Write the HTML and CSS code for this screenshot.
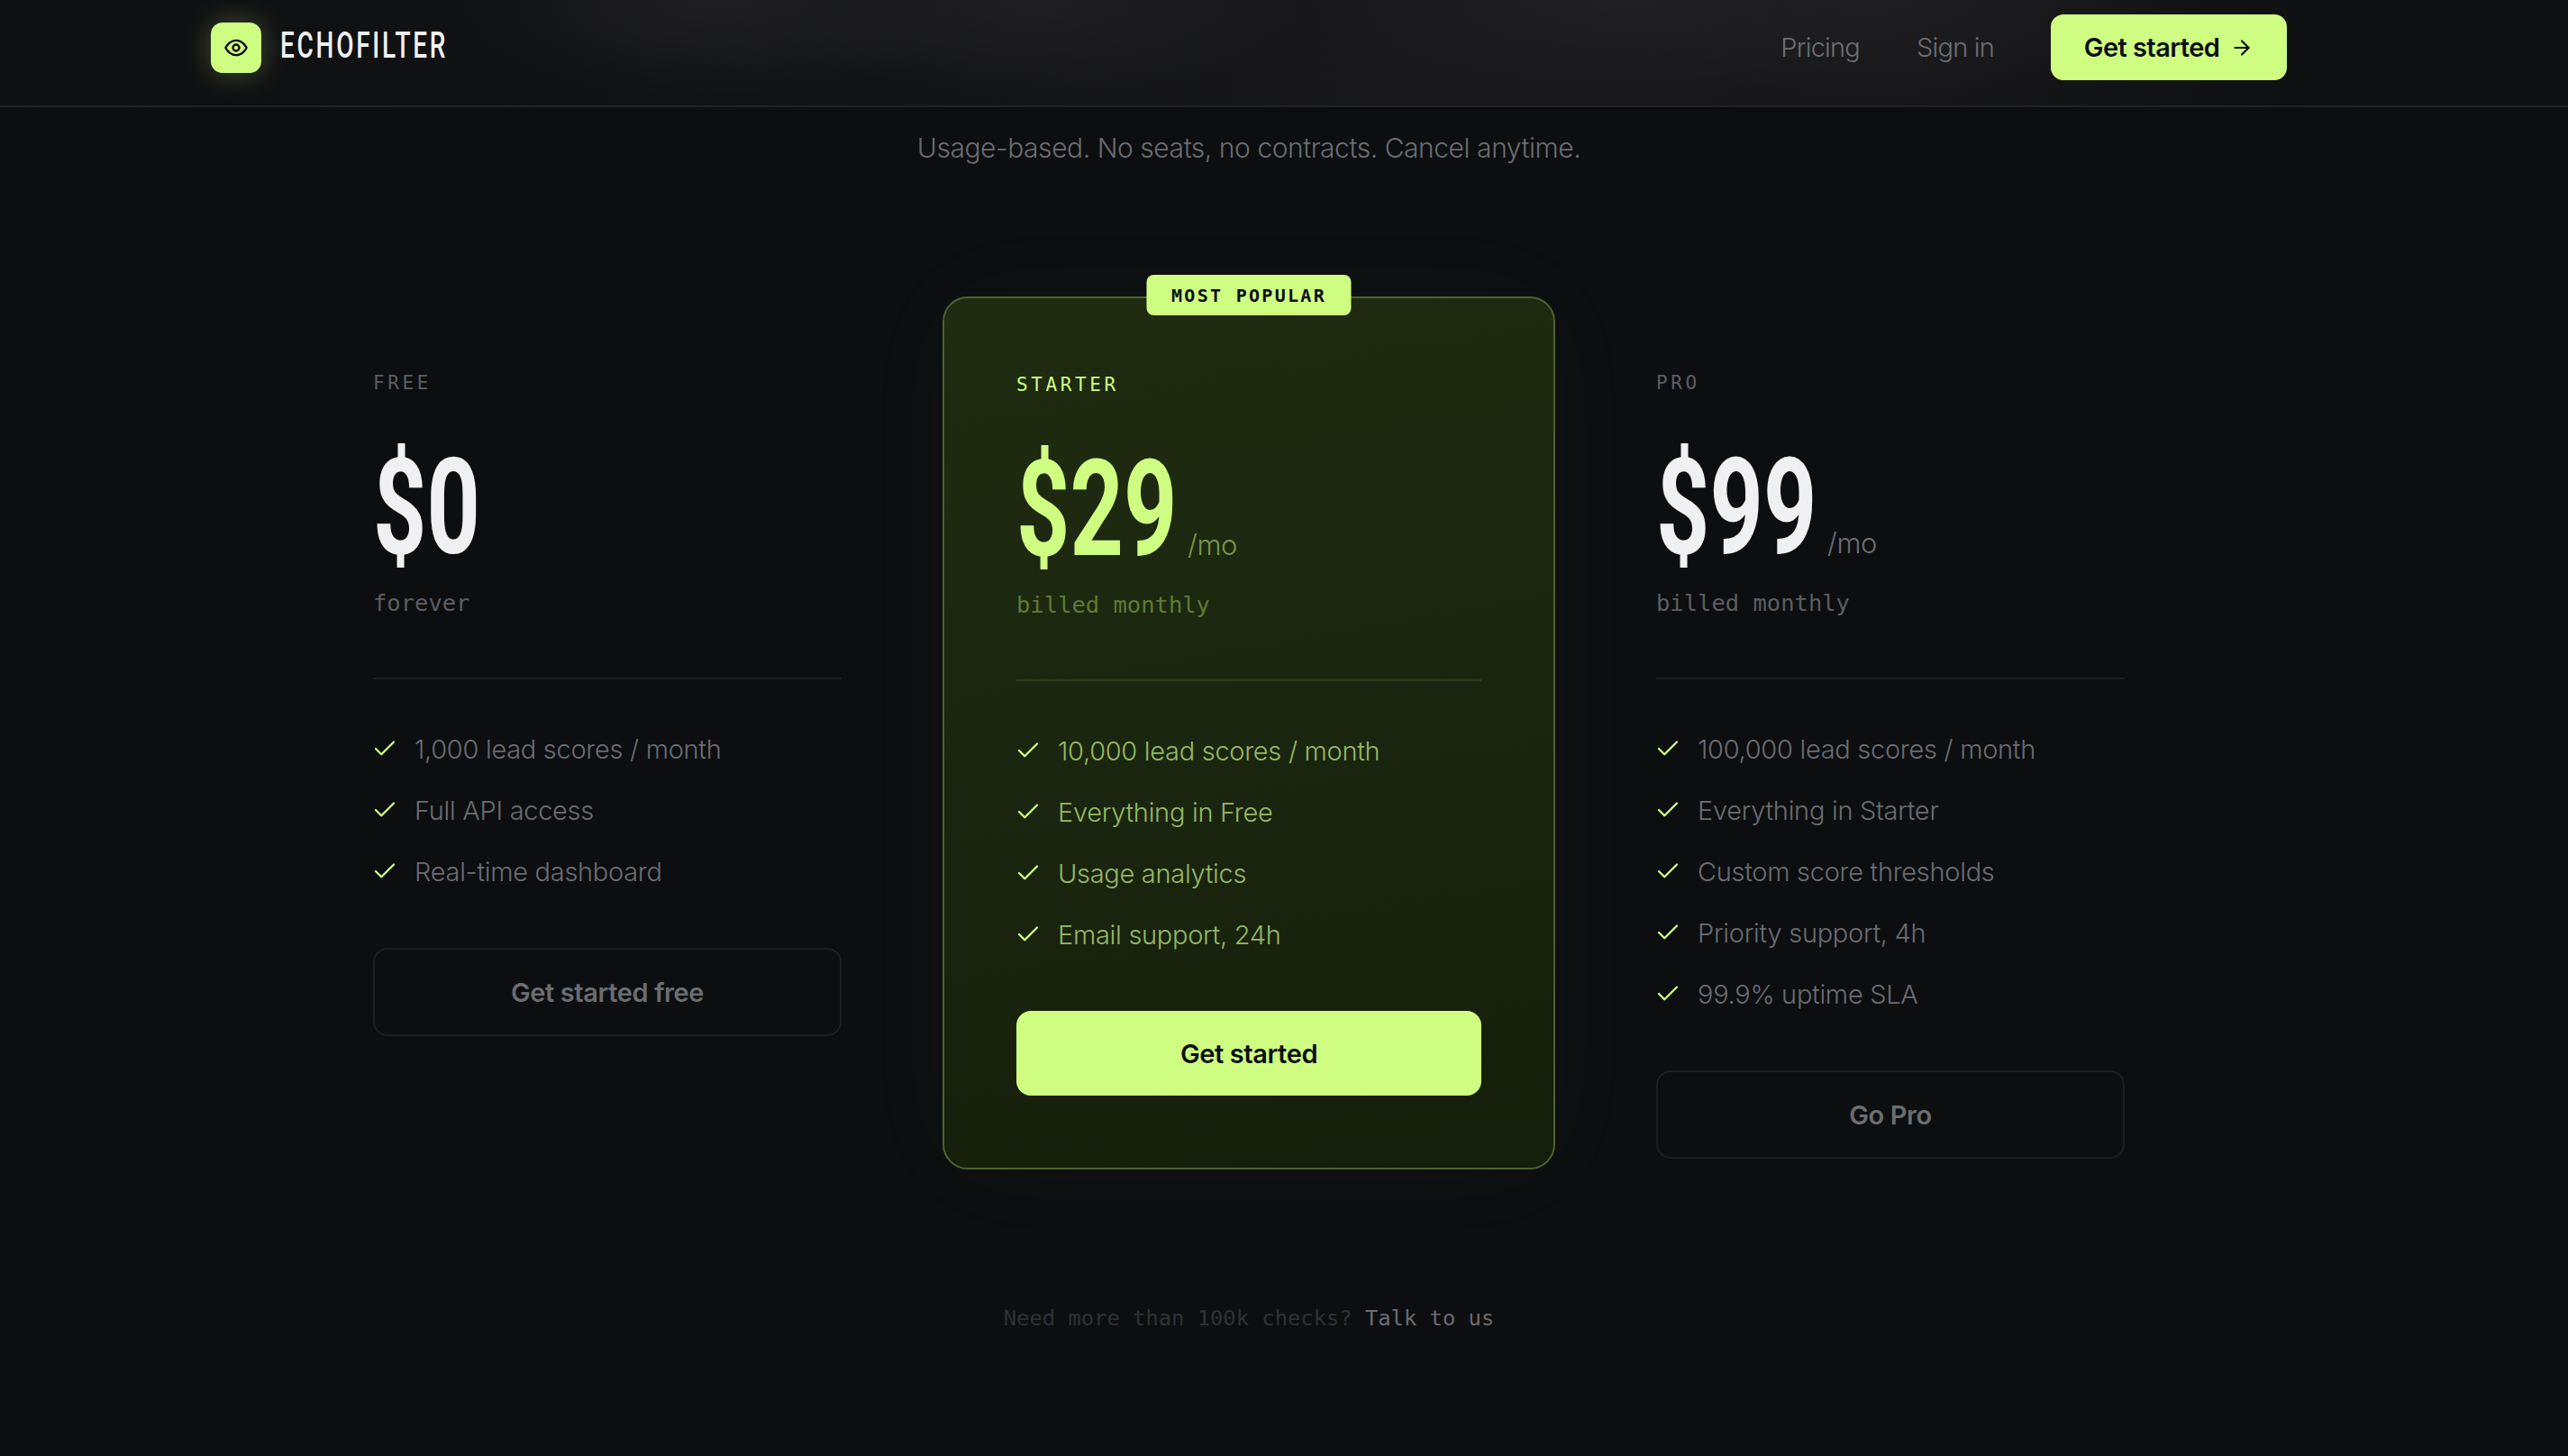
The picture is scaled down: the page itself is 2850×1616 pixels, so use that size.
FILE: index.html
```html
<!DOCTYPE html>
<html lang="en">
<head>
<meta charset="utf-8">
<title>EchoFilter Pricing</title>
<link rel="stylesheet" href="styles.css">
</head>
<body>
<header class="topbar">
  <div class="topbar-inner">
    <a class="brand" href="#">
      <span class="brand-mark">
        <svg class="eye" viewBox="0 0 24 24" fill="none" stroke="currentColor" stroke-width="2" stroke-linecap="round" stroke-linejoin="round"><path d="M2 12s3.5-7 10-7 10 7 10 7-3.5 7-10 7-10-7-10-7Z"/><circle cx="12" cy="12" r="3"/></svg>
      </span>
      <span class="brand-name">ECHOFILTER</span>
    </a>
    <nav class="nav">
      <a class="nav-link" href="#">Pricing</a>
      <a class="nav-link" href="#">Sign in</a>
      <a class="nav-cta" href="#">Get started
        <svg class="arrow" viewBox="0 0 24 24" fill="none" stroke="currentColor" stroke-width="2" stroke-linecap="round" stroke-linejoin="round"><path d="M5 12h14"/><path d="m12 5 7 7-7 7"/></svg>
      </a>
    </nav>
  </div>
</header>
<main class="page">
  <p class="subtitle">Usage-based. No seats, no contracts. Cancel anytime.</p>
  <section class="plans">
    <article class="plan">
      <h2 class="plan-name">FREE</h2>
      <div class="price-row"><span class="price">$0</span></div>
      <p class="billing">forever</p>
      <ul class="features">
        <li class="feature"><svg class="check" viewBox="0 0 24 24"><path d="M20 6 9 17l-5-5"/></svg>1,000 lead scores / month</li>
        <li class="feature"><svg class="check" viewBox="0 0 24 24"><path d="M20 6 9 17l-5-5"/></svg>Full API access</li>
        <li class="feature"><svg class="check" viewBox="0 0 24 24"><path d="M20 6 9 17l-5-5"/></svg>Real-time dashboard</li>
      </ul>
      <a class="plan-btn" href="#">Get started free</a>
    </article>
    <article class="plan plan-featured">
      <span class="badge">MOST POPULAR</span>
      <h2 class="plan-name">STARTER</h2>
      <div class="price-row"><span class="price">$29</span><span class="per">/mo</span></div>
      <p class="billing">billed monthly</p>
      <ul class="features">
        <li class="feature"><svg class="check" viewBox="0 0 24 24"><path d="M20 6 9 17l-5-5"/></svg>10,000 lead scores / month</li>
        <li class="feature"><svg class="check" viewBox="0 0 24 24"><path d="M20 6 9 17l-5-5"/></svg>Everything in Free</li>
        <li class="feature"><svg class="check" viewBox="0 0 24 24"><path d="M20 6 9 17l-5-5"/></svg>Usage analytics</li>
        <li class="feature"><svg class="check" viewBox="0 0 24 24"><path d="M20 6 9 17l-5-5"/></svg>Email support, 24h</li>
      </ul>
      <a class="plan-btn" href="#">Get started</a>
    </article>
    <article class="plan">
      <h2 class="plan-name">PRO</h2>
      <div class="price-row"><span class="price">$99</span><span class="per">/mo</span></div>
      <p class="billing">billed monthly</p>
      <ul class="features">
        <li class="feature"><svg class="check" viewBox="0 0 24 24"><path d="M20 6 9 17l-5-5"/></svg>100,000 lead scores / month</li>
        <li class="feature"><svg class="check" viewBox="0 0 24 24"><path d="M20 6 9 17l-5-5"/></svg>Everything in Starter</li>
        <li class="feature"><svg class="check" viewBox="0 0 24 24"><path d="M20 6 9 17l-5-5"/></svg>Custom score thresholds</li>
        <li class="feature"><svg class="check" viewBox="0 0 24 24"><path d="M20 6 9 17l-5-5"/></svg>Priority support, 4h</li>
        <li class="feature"><svg class="check" viewBox="0 0 24 24"><path d="M20 6 9 17l-5-5"/></svg>99.9% uptime SLA</li>
      </ul>
      <a class="plan-btn" href="#">Go Pro</a>
    </article>
  </section>
  <p class="footnote">Need more than 100k checks? <a class="footnote-link" href="#">Talk to us</a></p>
</main>
</body>
</html>
```
FILE: styles.css
```css
* { box-sizing: border-box; }
html, body { margin: 0; height: 100%; }
body {
  background: #0c0e10;
  color: #f0f0f2;
  font-family: Inter, "Liberation Sans", sans-serif;
  overflow: hidden;
}
a { text-decoration: none; color: inherit; }

.topbar {
  height: 119px;
  border-bottom: 2px solid #212224;
  background:
    radial-gradient(ellipse 300px 110px at 800px 0, #1f1f21 0%, rgba(31,31,33,0) 100%),
    radial-gradient(ellipse 300px 110px at 1150px 0, #1f1f21 0%, rgba(31,31,33,0) 100%),
    radial-gradient(ellipse 350px 110px at 1800px 0, #202022 0%, rgba(32,32,34,0) 100%),
    radial-gradient(ellipse 350px 110px at 2100px 0, #1e1e20 0%, rgba(30,30,32,0) 100%),
    linear-gradient(90deg, #0e0f11 0%, #121315 30%, #18181a 55%, #171719 75%, #0e0f11 92%);
}
.topbar-inner {
  width: 2304px;
  margin-left: 234px;
  height: 105px;
  display: flex;
  align-items: center;
  justify-content: space-between;
}
.brand { display: flex; align-items: center; gap: 21px; }
.brand-mark {
  width: 56px;
  height: 56px;
  border-radius: 13px;
  background: #cffd82;
  color: #0c0e10;
  display: flex;
  align-items: center;
  justify-content: center;
  box-shadow: 0 0 32px rgba(207, 253, 130, .28);
}
.eye { width: 28px; height: 28px; }
.brand-name {
  font-family: Roboto, "Liberation Sans", sans-serif;
  font-weight: 500;
  font-size: 40px;
  letter-spacing: 3.9px;
  color: #f0f0f2;
  transform: scaleX(.7);
  transform-origin: left center;
  margin-top: -5px;
}
.nav { display: flex; align-items: center; gap: 63px; }
.nav-link { font-size: 29px; font-weight: 300; color: #6e6f72; letter-spacing: -.8px; }
.nav-cta {
  width: 262px;
  height: 73px;
  border-radius: 14px;
  background: #cffd82;
  color: #0c0e10;
  font-size: 29px;
  font-weight: 600;
  letter-spacing: -.55px;
  display: flex;
  align-items: center;
  justify-content: center;
  gap: 12px;
}
.arrow { width: 26px; height: 26px; }

.page { width: 2104px; margin-left: 334px; }
.subtitle {
  margin: 24px 0 0;
  text-align: center;
  font-size: 30px;
  line-height: 42px;
  font-weight: 300;
  letter-spacing: -.45px;
  color: #6b6d70;
}
.plans {
  margin-top: 144px;
  display: grid;
  grid-template-columns: repeat(3, 680px);
  gap: 32px;
  align-items: start;
}
.plan { position: relative; padding: 81px 80px 80px; }
.plan-featured {
  border: 2px solid #4c6230;
  border-radius: 28px;
  background: linear-gradient(170deg, #202c10 0%, #1b2610 50%, #151e0a 100%);
  box-shadow: 0 0 120px rgba(230, 240, 210, .03);
}
.badge {
  position: absolute;
  top: -26px;
  left: 50%;
  transform: translateX(-50%);
  width: 227px;
  height: 45px;
  border-radius: 8px;
  background: #cffd82;
  color: #0c0e10;
  font-family: "DejaVu Sans Mono", monospace;
  font-weight: 700;
  font-size: 20px;
  letter-spacing: 2.3px;
  display: flex;
  align-items: center;
  justify-content: center;
  white-space: nowrap;
}
.plan-name {
  margin: 0;
  font-family: "DejaVu Sans Mono", monospace;
  font-weight: 400;
  font-size: 21px;
  line-height: 30px;
  letter-spacing: 3.6px;
  color: #5c5e61;
}
.plan-featured .plan-name { color: #cffd82; }
.price-row {
  margin-top: 66px;
  height: 116px;
  display: flex;
  align-items: baseline;
}
.price {
  display: inline-block;
  width: 176px;
  font-family: Roboto, "Liberation Sans", sans-serif;
  font-weight: 700;
  font-size: 148px;
  line-height: 116px;
  color: #f0f0f2;
  white-space: nowrap;
  transform: scaleX(.7);
  transform-origin: left center;
}
.plan-featured .price { color: #cffd82; }
.per { margin-left: 14px; font-size: 31px; font-weight: 300; color: #6b6d70; letter-spacing: -.4px; }
.plan-featured .per { color: #7a9548; }
.billing {
  margin: 30px 0 0;
  height: 100px;
  font-family: "DejaVu Sans Mono", monospace;
  font-size: 25.5px;
  line-height: 34px;
  color: #5c5e61;
}
.plan-featured .billing { color: #5e7a36; }
.features {
  list-style: none;
  margin: 0;
  padding: 43px 0 0;
  border-top: 2px solid #1b1c1f;
}
.plan-featured .features { border-top-color: #2e3c1c; }
.feature {
  height: 68px;
  display: flex;
  align-items: center;
  gap: 18px;
  font-size: 29px;
  font-weight: 300;
  letter-spacing: -.3px;
  color: #6b6d70;
  white-space: nowrap;
}
.plan-featured .feature { color: #96b864; }
.check {
  width: 30px;
  height: 30px;
  margin-left: -2px;
  flex: none;
  fill: none;
  stroke: #cffd82;
  stroke-width: 1.9;
  stroke-linecap: round;
  stroke-linejoin: round;
}
.plan-btn {
  margin-top: 51px;
  height: 98px;
  border: 2px solid #1e1f22;
  border-radius: 16px;
  color: #6b6d70;
  font-size: 29px;
  font-weight: 600;
  letter-spacing: -.4px;
  display: flex;
  align-items: center;
  justify-content: center;
}
.plan-featured .plan-btn {
  height: 94px;
  border: 0;
  background: #cffd82;
  color: #0c0e10;
}
.footnote {
  margin: 80px 0 0;
  text-align: center;
  font-family: "DejaVu Sans Mono", monospace;
  font-size: 23.8px;
  line-height: 34px;
  color: #303234;
}
.footnote-link { color: #6b6d70; }
```
